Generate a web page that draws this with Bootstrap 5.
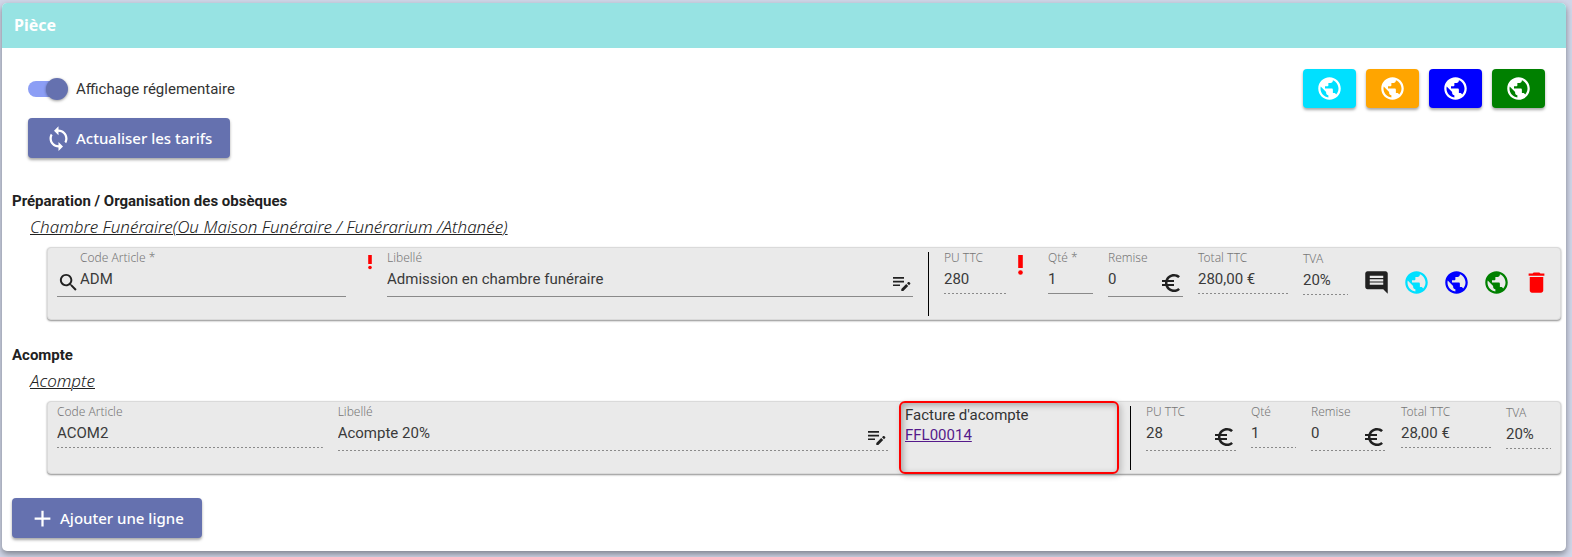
<!DOCTYPE html>
<html lang="fr">
<head>
<meta charset="utf-8">
<meta name="viewport" content="width=device-width, initial-scale=1">
<title>Pièce</title>
<link rel="stylesheet" href="https://cdn.jsdelivr.net/npm/bootstrap@5.3.0/dist/css/bootstrap.min.css">
<style>
  body { background: #d0d6e8; color: #212121; font: 400 15px/24px Roboto, "Liberation Sans", sans-serif; padding: 3px 6px 6px 2px; }
  .piece { border: 0; border-radius: 5px; box-shadow: 0 3px 6px rgba(0,0,0,.4); }
  .piece-head { background: #97e3e3; color: #fff; height: 45px; padding: 0 12px; border-radius: 5px 5px 0 0; font: 700 16px/45px "Noto Sans", sans-serif; }
  .piece-head h1 { font: inherit; margin: 0; }
  svg { display: block; fill: currentColor; flex: none; }
  .ic { width: 27px; height: 27px; }

  .tools { padding: 21px 21px 0 26px; }
  .switch-row { height: 39px; margin-bottom: 10px; color: #333; }
  .webs { gap: 10px; }
  .toggle { appearance: none; position: relative; width: 38px; height: 16px; margin: 0 10px 0 0; border-radius: 8px; background: #8c9ef5; }
  .toggle::before { content: ""; position: absolute; right: -2px; top: -3px; width: 22px; height: 22px; border-radius: 50%; background: #6571af; box-shadow: 0 1px 3px rgba(0,0,0,.4); }
  .toggle:not(:checked)::before { right: auto; left: -2px; }
  .btn-main, .btn-web { border: 0; border-radius: 4px; color: #fff; box-shadow: 0 2px 3px rgba(0,0,0,.35); }
  .btn-main { --bs-btn-color: #fff; --bs-btn-hover-color: #fff; --bs-btn-hover-bg: #56619b; background: #6571af; height: 40px; padding: 0 18px 0 17px; font: 500 15px/38px "Noto Sans", sans-serif; }
  .btn-web { width: 53px; height: 39px; padding: 0; }
  .bg-cyan { background: #00e0ff; } .bg-amber { background: #ffa500; } .bg-blue { background: #00f; } .bg-leaf { background: #008000; }

  .group { margin-bottom: 23px; }
  .tools + .group { margin-top: 31px; }
  .group-title { font: 700 15px/24px Roboto, sans-serif; margin: 0 0 2px 10px; }
  .group-sub { font: italic 300 17px/24px "Noto Sans", sans-serif; margin: 0 0 8px 28px; text-decoration: underline; text-decoration-thickness: 1px; }
  .line { height: 73px; margin: 0 5px 0 45px; padding: 1px 9px 0; gap: 15px; background: #eaeaea; border: 1px solid #dadada; border-radius: 4px; box-shadow: 0 1px 2px rgba(0,0,0,.45); }
  .fld { flex: none; }
  .fld label { display: block; font: 300 12px/18px "Noto Sans", sans-serif; color: #777; white-space: nowrap; }
  .fld input { flex: 1 1 0; width: 100%; min-width: 0; height: 22px; margin-top: 1px; padding: 0; border: 0; background: none; color: #3a3a3a; font: 400 15px/22px Roboto, sans-serif; outline: 0; }
  .fld .under-icon { padding-left: 23px; }
  .ctl { height: 27px; border-bottom: 1px solid #8a8a8a; }
  .ctl.tall { height: 30px; }
  .ctl.off { border: 0; background: repeating-linear-gradient(90deg, #8a8a8a 0 2px, transparent 2px 4px) bottom / 100% 1px no-repeat; }
  .w-s { width: 45px; } .w-m { width: 63px; } .w-l { width: 75px; } .w-xl { width: 90px; }
  .f-code { flex: 289 1 0; } .f-label { flex: 526 1 0; }
  .f-code2 { flex: 266 1 0; } .f-label2 { flex: 551 1 0; }
  .tva { padding-top: 1px; }
  .bar { width: 1px; height: 64px; margin-top: 3px; background: #000; flex: none; }
  .warn { flex: none; width: 26px; margin-left: -15px; color: #f00; }
  .acts { gap: 13px; margin-top: 20px; padding-right: 1px; flex: none; }
  .acts button, .mini { border: 0; background: none; padding: 0; color: #212121; }
  .mini { margin-right: 2px; }
  .acts .fg-cyan { color: #00e0ff; } .acts .fg-blue { color: #00f; } .acts .fg-leaf { color: #008000; } .acts .fg-red { color: #f00; }
  .invoice { flex: none; width: 220px; height: 73px; margin: -2px -4px 0; padding: 2px 4px; border: 2px solid #f00; border-radius: 6px; color: #333; font: 400 15px/20px Roboto, sans-serif; box-shadow: 2px 2px 6px rgba(0,0,0,.2), inset 2px 2px 6px rgba(0,0,0,.3); }
  .invoice a { color: #551a8b; }
  .add { margin: 1px 0 13px 10px; }
</style>
</head>
<body>
<svg class="d-none" aria-hidden="true">
  <symbol id="web" viewBox="0 0 24 24"><path d="M12 2C6.480 2 2 6.480 2 12s4.480 10 10 10 10-4.480 10-10S17.520 2 12 2zm-1 17.930c-3.950-.49-7-3.850-7-7.930 0-.62.080-1.210.21-1.790L9 15v1c0 1.100.9 2 2 2v1.930zm6.900-2.540c-.26-.81-1-1.390-1.900-1.390h-1v-3c0-.55-.45-1-1-1H8v-2h2c.55 0 1-.45 1-1V7h2c1.100 0 2-.9 2-2v-.41c2.930 1.190 5 4.060 5 7.410 0 2.080-.8 3.970-2.100 5.390z"/></symbol>
  <symbol id="euro" viewBox="0 0 24 24"><path d="M15 18.500c-2.510 0-4.680-1.420-5.760-3.500H15v-2H8.580c-.05-.33-.08-.66-.08-1s.03-.67.080-1H15V9H9.240C10.320 6.920 12.500 5.500 15 5.500c1.610 0 3.090.59 4.230 1.570L21 5.300C19.410 3.870 17.300 3 15 3c-3.920 0-7.240 2.510-8.480 6H3v2h3.060c-.04.33-.06.66-.06 1s.02.67.060 1H3v2h3.520c1.240 3.490 4.560 6 8.480 6 2.310 0 4.410-.87 6-2.300l-1.780-1.770c-1.130.98-2.600 1.570-4.220 1.570z"/></symbol>
  <symbol id="note" viewBox="0 0 19 16"><path d="M1 1h11v1.700H1zM1 4.700h11v1.700H1zM1 8.400h7v1.700H1zM9.300 13l4.900-4.900 2 2-4.900 4.900h-2zM15 7.300l1.200-1.200c.3-.3.700-.3 1 0l1 1c.3.300.3.700 0 1L17 9.300z"/></symbol>
</svg>

<main class="card piece">
  <header class="piece-head"><h1>Pièce</h1></header>

  <section class="tools d-flex justify-content-between align-items-start">
    <div>
      <div class="switch-row d-flex align-items-center">
        <input class="toggle" type="checkbox" role="switch" id="reg" checked>
        <label for="reg">Affichage réglementaire</label>
      </div>
      <button type="button" class="btn btn-main d-flex align-items-center">
        <svg class="ic me-1" viewBox="0 0 24 24"><path d="M12 4V1L8 5l4 4V6c3.310 0 6 2.690 6 6 0 1.010-.25 1.970-.7 2.800l1.460 1.460C19.540 15.030 20 13.570 20 12c0-4.420-3.580-8-8-8zm0 14c-3.310 0-6-2.690-6-6 0-1.010.25-1.970.7-2.800L5.240 7.740C4.460 8.970 4 10.430 4 12c0 4.420 3.580 8 8 8v3l4-4-4-4v3z"/></svg>
        Actualiser les tarifs
      </button>
    </div>
    <div class="webs d-flex">
      <button type="button" aria-label="Site cyan" class="btn-web bg-cyan d-flex align-items-center justify-content-center"><svg class="ic"><use href="#web"/></svg></button>
      <button type="button" aria-label="Site orange" class="btn-web bg-amber d-flex align-items-center justify-content-center"><svg class="ic"><use href="#web"/></svg></button>
      <button type="button" aria-label="Site bleu" class="btn-web bg-blue d-flex align-items-center justify-content-center"><svg class="ic"><use href="#web"/></svg></button>
      <button type="button" aria-label="Site vert" class="btn-web bg-leaf d-flex align-items-center justify-content-center"><svg class="ic"><use href="#web"/></svg></button>
    </div>
  </section>

  <section class="group">
    <h2 class="group-title">Préparation / Organisation des obsèques</h2>
    <h3 class="group-sub">Chambre Funéraire(Ou Maison Funéraire / Funérarium /Athanée)</h3>
    <div class="line d-flex align-items-start">
      <div class="fld f-code">
        <label for="c1" class="under-icon">Code Article *</label>
        <div class="ctl tall d-flex">
          <svg class="mt-1" width="23" height="23" viewBox="0 0 24 24"><path d="M15.500 14h-.79l-.28-.27C15.410 12.590 16 11.110 16 9.500 16 5.910 13.090 3 9.500 3S3 5.910 3 9.500 5.910 16 9.500 16c1.610 0 3.090-.59 4.230-1.570l.27.28v.79l5 4.990L20.490 19l-4.990-5zm-6 0C7.010 14 5 11.990 5 9.500S7.010 5 9.500 5 14 7.010 14 9.500 11.990 14 9.500 14z"/></svg>
          <input id="c1" value="ADM">
        </div>
      </div>
      <svg class="warn" height="24" viewBox="0 0 26 24"><path d="M22.200 6h3.600v9h-3.600z"/><circle cx="24" cy="18.500" r="1.800"/></svg>
      <div class="fld f-label">
        <label for="l1">Libellé</label>
        <div class="ctl tall d-flex"><input id="l1" value="Admission en chambre funéraire"><button type="button" class="mini" aria-label="Modifier le libellé"><svg width="19" height="16" class="mt-1"><use href="#note"/></svg></button></div>
      </div>
      <div class="bar"></div>
      <div class="fld w-m"><label for="p1">PU TTC</label><div class="ctl off d-flex"><input id="p1" value="280" readonly></div></div>
      <svg class="warn" height="30" viewBox="0 0 26 30"><path d="M11.200 6h4.600v13h-4.600z"/><circle cx="13.500" cy="23.500" r="2.300"/></svg>
      <div class="fld w-s"><label for="q1">Qté *</label><div class="ctl d-flex"><input id="q1" value="1"></div></div>
      <div class="fld w-l"><label for="r1">Remise</label><div class="ctl tall d-flex"><input id="r1" value="0"><svg width="24" height="24" class="mt-1"><use href="#euro"/></svg></div></div>
      <div class="fld w-xl"><label for="t1">Total TTC</label><div class="ctl off d-flex"><input id="t1" value="280,00 €" readonly></div></div>
      <div class="fld w-s tva"><label for="v1">TVA</label><div class="ctl off d-flex"><input id="v1" value="20%" readonly></div></div>
      <div class="acts d-flex">
        <button type="button" aria-label="Commentaire"><svg class="ic" viewBox="0 0 24 24"><path d="M21.990 4c0-1.100-.89-2-1.990-2H4c-1.100 0-2 .9-2 2v12c0 1.100.9 2 2 2h14l4 4-.01-18zM18 14H6v-2h12v2zm0-3H6V9h12v2zm0-3H6V6h12v2z"/></svg></button>
        <button type="button" aria-label="Site cyan" class="fg-cyan"><svg class="ic"><use href="#web"/></svg></button>
        <button type="button" aria-label="Site bleu" class="fg-blue"><svg class="ic"><use href="#web"/></svg></button>
        <button type="button" aria-label="Site vert" class="fg-leaf"><svg class="ic"><use href="#web"/></svg></button>
        <button type="button" aria-label="Supprimer" class="fg-red"><svg class="ic" viewBox="0 0 24 24"><path d="M6 19c0 1.100.9 2 2 2h8c1.100 0 2-.9 2-2V7H6v12zM19 4h-3.500l-1-1h-5l-1 1H5v2h14V4z"/></svg></button>
      </div>
    </div>
  </section>

  <section class="group">
    <h2 class="group-title">Acompte</h2>
    <h3 class="group-sub">Acompte</h3>
    <div class="line d-flex align-items-start">
      <div class="fld f-code2"><label for="c2">Code Article</label><div class="ctl off d-flex"><input id="c2" value="ACOM2" readonly></div></div>
      <div class="fld f-label2">
        <label for="l2">Libellé</label>
        <div class="ctl tall off d-flex"><input id="l2" value="Acompte 20%" readonly><button type="button" class="mini" aria-label="Modifier le libellé"><svg width="19" height="16" class="mt-1"><use href="#note"/></svg></button></div>
      </div>
      <div class="invoice"><div>Facture d'acompte</div><a href="#FFL00014">FFL00014</a></div>
      <div class="bar"></div>
      <div class="fld w-xl"><label for="p2">PU TTC</label><div class="ctl tall off d-flex"><input id="p2" value="28" readonly><svg width="24" height="24" class="mt-1"><use href="#euro"/></svg></div></div>
      <div class="fld w-s"><label for="q2">Qté</label><div class="ctl off d-flex"><input id="q2" value="1" readonly></div></div>
      <div class="fld w-l"><label for="r2">Remise</label><div class="ctl tall off d-flex"><input id="r2" value="0" readonly><svg width="24" height="24" class="mt-1"><use href="#euro"/></svg></div></div>
      <div class="fld w-xl"><label for="t2">Total TTC</label><div class="ctl off d-flex"><input id="t2" value="28,00 €" readonly></div></div>
      <div class="fld w-s tva"><label for="v2">TVA</label><div class="ctl off d-flex"><input id="v2" value="20%" readonly></div></div>
    </div>
  </section>

  <div class="add">
    <button type="button" class="btn btn-main d-flex align-items-center">
      <svg class="ic me-1" viewBox="0 0 24 24"><path d="M19 13h-6v6h-2v-6H5v-2h6V5h2v6h6v2z"/></svg>
      Ajouter une ligne
    </button>
  </div>
</main>
<script src="https://cdn.jsdelivr.net/npm/bootstrap@5.3.0/dist/js/bootstrap.bundle.min.js"></script>
</body>
</html>
